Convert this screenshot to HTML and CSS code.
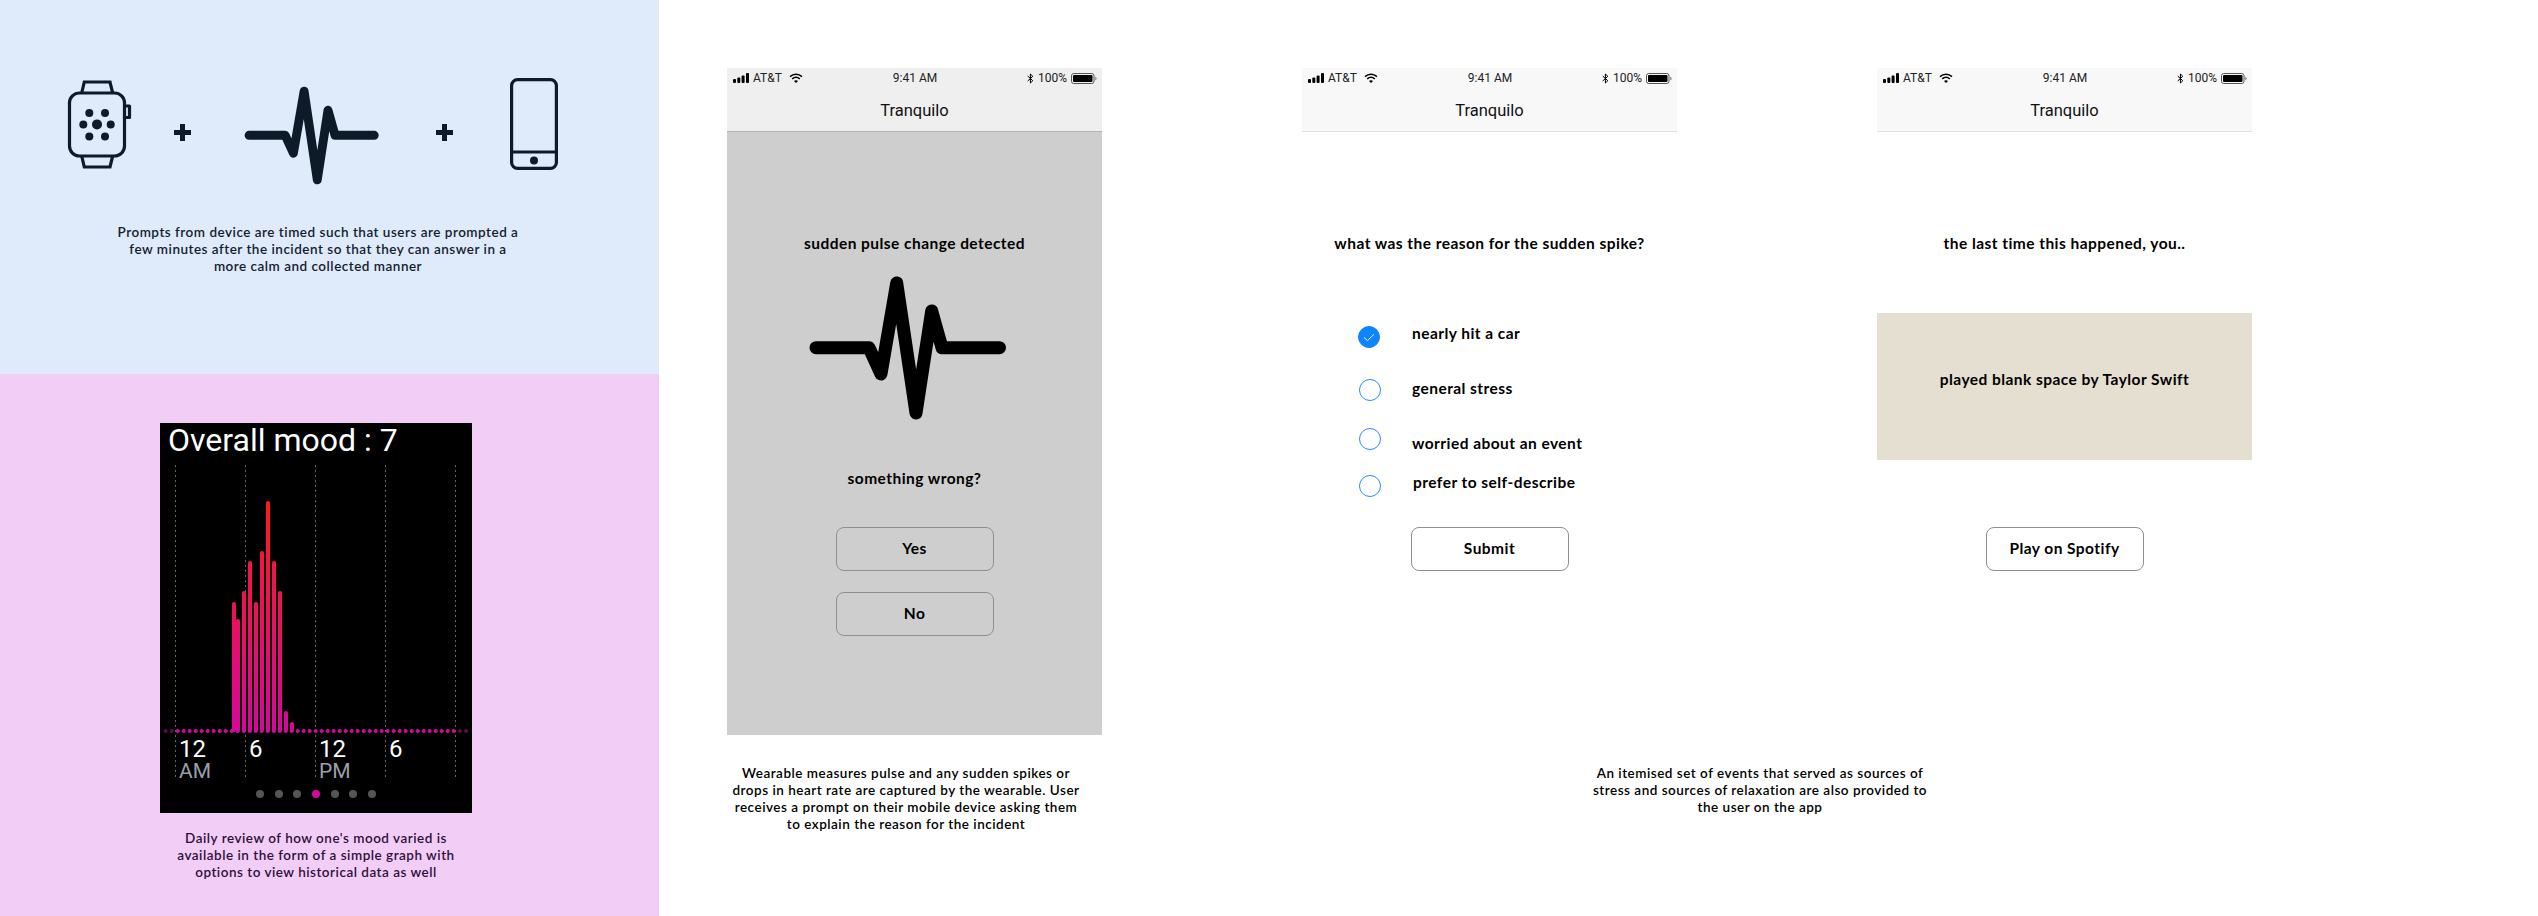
FILE: index.html
```html
<!DOCTYPE html>
<html lang="en">
<head>
  <meta charset="UTF-8">
  <title>Tranquilo</title>
  <link rel="stylesheet" href="styles.css">
</head>
<body>

  <!-- Shared icons -->
  <svg class="defs" width="0" height="0">
    <symbol id="pulse" viewBox="0 0 200 148">
      <path d="M7 73.7H60L72 100L87.7 9L107 139L122.7 37L133 73.7H190.5" fill="none" stroke="currentColor" stroke-width="13" stroke-linecap="round" stroke-linejoin="round"/>
    </symbol>
    <symbol id="plus" viewBox="0 0 17 17">
      <path d="M0 8.5H17M8.5 0V17" stroke="currentColor" stroke-width="5"/>
    </symbol>
    <symbol id="status-left" viewBox="0 0 16 10">
      <rect x="0" y="6" width="3" height="4" rx="1"/>
      <rect x="4.3" y="4.5" width="3" height="5.5" rx="1"/>
      <rect x="8.6" y="2.5" width="3" height="7.5" rx="1"/>
      <rect x="13" y="0" width="3" height="10" rx="1"/>
    </symbol>
    <symbol id="wifi" viewBox="0 0 14 10">
      <path d="M1 3.6C4.4 .5 9.6 .5 13 3.6M3.2 5.9C5.4 4 8.6 4 10.8 5.9" fill="none" stroke="#000" stroke-width="1.5"/>
      <path d="M5 7.9C6.2 6.9 7.8 6.9 9 7.9L7 10Z"/>
    </symbol>
    <symbol id="bluetooth" viewBox="0 0 7 11">
      <path d="M.7 3L5.8 7.7L3.4 10V1L5.8 3.3L.7 8" fill="none" stroke="#000" stroke-width="1"/>
    </symbol>
    <symbol id="battery" viewBox="0 0 26 11">
      <rect x=".5" y=".5" width="22.5" height="10" rx="2.2" fill="none" stroke="#555"/>
      <rect x="2" y="2" width="19.5" height="7" rx="1"/>
      <path d="M24.3 3.7C25.2 4 25.6 4.7 25.6 5.5S25.2 7 24.3 7.3Z" fill="#777"/>
    </symbol>
  </svg>

  <div class="side">
    <section class="panel panel-blue">
      <div class="icon-row">
        <svg class="icon-watch" viewBox="0 0 66 90" fill="none" stroke="currentColor" stroke-width="3.2">
          <rect x="3.5" y="13" width="55" height="63" rx="10"/>
          <path d="M15.7 13L18.3 2H44L46.7 13M15.7 76L18.3 87H44L46.7 76"/>
          <path d="M58.5 26H63.5V37.5H58.5" stroke-linejoin="round"/>
          <g fill="currentColor" stroke="none">
            <circle cx="23.3" cy="33" r="4"/>
            <circle cx="39" cy="33" r="4"/>
            <circle cx="17.3" cy="44.4" r="4"/>
            <circle cx="31" cy="44.4" r="5"/>
            <circle cx="44.7" cy="44.4" r="4"/>
            <circle cx="23.3" cy="56.4" r="4"/>
            <circle cx="39" cy="56.4" r="4"/>
          </g>
        </svg>
        <svg class="icon-plus"><use href="#plus"/></svg>
        <svg class="icon-pulse"><use href="#pulse"/></svg>
        <svg class="icon-plus icon-plus-2"><use href="#plus"/></svg>
        <svg class="icon-phone" viewBox="0 0 48 92" fill="none" stroke="currentColor" stroke-width="3.2">
          <rect x="1.6" y="1.6" width="44.8" height="88.8" rx="6"/>
          <path d="M1.6 74H46.4"/>
          <circle cx="24" cy="82.5" r="4" fill="currentColor" stroke="none"/>
        </svg>
      </div>
      <p class="caption caption-blue">Prompts from device are timed such that users are prompted a<br>few minutes after the incident so that they can answer in a<br>more calm and collected manner</p>
    </section>

    <section class="panel panel-pink">
      <div class="watch">
        <div class="watch-title">Overall mood : 7</div>
        <svg class="chart" viewBox="0 0 312 314" width="312" height="314">
          <defs>
            <linearGradient id="bar-fill" gradientUnits="userSpaceOnUse" x1="0" y1="36" x2="0" y2="267">
              <stop offset="0" stop-color="#ff1a1f"/>
              <stop offset="1" stop-color="#d4089c"/>
            </linearGradient>
          </defs>
          <path class="grid-line" d="M15.5 0V314M85.5 0V314M155.5 0V314M225.5 0V314M295.5 0V314"/>
          <path class="dots dots-dim" d="M5.7 266H12M300 266H307"/>
          <path class="dots" d="M17.7 266H295"/>
          <g fill="url(#bar-fill)">
            <rect x="72" y="137" width="4" height="130" rx="2"/>
            <rect x="76" y="154" width="4" height="113" rx="2"/>
            <rect x="82" y="126" width="4" height="141" rx="2"/>
            <rect x="88" y="96" width="4" height="171" rx="2"/>
            <rect x="94" y="137" width="4" height="130" rx="2"/>
            <rect x="100" y="86" width="4" height="181" rx="2"/>
            <rect x="106" y="36" width="4" height="231" rx="2"/>
            <rect x="112" y="96" width="4" height="171" rx="2"/>
            <rect x="118" y="126" width="4" height="141" rx="2"/>
            <rect x="124" y="246" width="4" height="21" rx="2"/>
            <rect x="130" y="257" width="4" height="10" rx="2"/>
          </g>
        </svg>
        <div class="axis">
          <div class="tick">12<span>AM</span></div>
          <div class="tick">6</div>
          <div class="tick">12<span>PM</span></div>
          <div class="tick">6</div>
        </div>
        <div class="pager">
          <i></i><i></i><i></i><i class="on"></i><i></i><i></i><i></i>
        </div>
      </div>
      <p class="caption caption-pink">Daily review of how one's mood varied is<br>available in the form of a simple graph with<br>options to view historical data as well</p>
    </section>
  </div>

  <div class="screen-col first-col">
    <div class="phone phone-dim">
      <div class="status">
        <div class="status-left"><svg class="st-signal"><use href="#status-left"/></svg>AT&amp;T<svg class="st-wifi"><use href="#wifi"/></svg></div>
        <div class="status-mid">9:41 AM</div>
        <div class="status-right"><svg class="st-bt"><use href="#bluetooth"/></svg>100%<svg class="st-batt"><use href="#battery"/></svg></div>
      </div>
      <div class="nav">Tranquilo</div>
      <div class="phone-body">
        <div class="question">sudden pulse change detected</div>
        <svg class="big-pulse"><use href="#pulse"/></svg>
        <div class="wrong">something wrong?</div>
        <div class="btn">Yes</div>
        <div class="btn btn-no">No</div>
      </div>
    </div>
    <p class="caption caption-phone">Wearable measures pulse and any sudden spikes or<br>drops in heart rate are captured by the wearable. User<br>receives a prompt on their mobile device asking them<br>to explain the reason for the incident</p>
  </div>

  <div class="screen-col second-col">
    <div class="phone-row">
      <div class="phone">
        <div class="status">
          <div class="status-left"><svg class="st-signal"><use href="#status-left"/></svg>AT&amp;T<svg class="st-wifi"><use href="#wifi"/></svg></div>
          <div class="status-mid">9:41 AM</div>
          <div class="status-right"><svg class="st-bt"><use href="#bluetooth"/></svg>100%<svg class="st-batt"><use href="#battery"/></svg></div>
        </div>
        <div class="nav">Tranquilo</div>
        <div class="phone-body">
          <div class="question">what was the reason for the sudden spike?</div>
          <ul class="options">
            <li class="opt-1"><span class="radio checked"><svg viewBox="0 0 22 22"><path d="M5.5 11.5L9.3 15L16.5 8" fill="none" stroke="#fff" stroke-width="1"/></svg></span><span class="opt-text">nearly hit a car</span></li>
            <li class="opt-2"><span class="radio"></span><span class="opt-text">general stress</span></li>
            <li class="opt-3"><span class="radio"></span><span class="opt-text">worried about an event</span></li>
            <li class="opt-4"><span class="radio"></span><span class="opt-text">prefer to self-describe</span></li>
          </ul>
          <div class="btn btn-submit">Submit</div>
        </div>
      </div>

      <div class="phone">
        <div class="status">
          <div class="status-left"><svg class="st-signal"><use href="#status-left"/></svg>AT&amp;T<svg class="st-wifi"><use href="#wifi"/></svg></div>
          <div class="status-mid">9:41 AM</div>
          <div class="status-right"><svg class="st-bt"><use href="#bluetooth"/></svg>100%<svg class="st-batt"><use href="#battery"/></svg></div>
        </div>
        <div class="nav">Tranquilo</div>
        <div class="phone-body">
          <div class="question">the last time this happened, you..</div>
          <div class="memory">played blank space by Taylor Swift</div>
          <div class="btn btn-play">Play on Spotify</div>
        </div>
      </div>
    </div>
    <p class="caption caption-events">An itemised set of events that served as sources of<br>stress and sources of relaxation are also provided to<br>the user on the app</p>
  </div>

</body>
</html>
```

FILE: styles.css
```css
* {
  margin: 0;
  padding: 0;
  box-sizing: border-box;
}

body {
  display: flex;
  width: 2538px;
  height: 916px;
  overflow: hidden;
  background-color: #fff;
  color: #000;
  font-family: 'Lato', 'Open Sans', sans-serif;
}

.defs {
  position: absolute;
}

/* Left column */
.side {
  width: 659px;
  flex: none;
}

.panel {
  overflow: hidden;
}

.panel-blue {
  height: 374px;
  background-color: #dfebfb;
  color: #0d1a28;
}

.panel-pink {
  height: 542px;
  background-color: #f2cef6;
  padding-top: 49px;
}

.icon-row {
  display: flex;
  align-items: flex-start;
  padding: 78px 0 0 66px;
}

.icon-row svg {
  flex: none;
}

.icon-watch {
  width: 66px;
  height: 90px;
  margin-top: 2px;
}

.icon-plus {
  width: 17px;
  height: 17px;
  margin: 46px 0 0 42px;
}

.icon-pulse {
  width: 137px;
  height: 101px;
  margin: 7px 0 0 53px;
  color: #0d1a28;
}

.icon-plus-2 {
  margin-left: 55px;
}

.icon-phone {
  width: 48px;
  height: 92px;
  margin-left: 57px;
}

.caption {
  font-size: 13.5px;
  line-height: 17px;
  font-weight: 600;
  letter-spacing: .5px;
  text-align: center;
}

.caption-blue {
  width: 420px;
  margin: 38px 0 0 108px;
  color: #14202e;
}

.caption-pink {
  width: 360px;
  margin: 17px 0 0 136px;
  color: #2f0f3c;
}

/* Watch graph */
.watch {
  position: relative;
  width: 312px;
  height: 390px;
  margin-left: 160px;
  background-color: #000;
  color: #fff;
  font-family: 'Roboto', sans-serif;
}

.watch-title {
  height: 42px;
  padding-left: 8px;
  font-size: 32px;
  line-height: 34px;
}

.chart {
  display: block;
}

.grid-line {
  fill: none;
  stroke: #666;
  stroke-width: 1;
  stroke-dasharray: 2 3;
}

.dots {
  fill: none;
  stroke: #d4089c;
  stroke-width: 4;
  stroke-linecap: round;
  stroke-dasharray: 0 6;
}

.dots-dim {
  stroke: #5e0b48;
}

.axis {
  position: absolute;
  left: 19px;
  top: 315px;
  display: flex;
  font-size: 24px;
  line-height: 22px;
}

.tick {
  width: 70px;
}

.tick span {
  display: block;
  color: #9aa0a9;
  font-size: 21px;
}

.pager {
  display: flex;
  justify-content: center;
  gap: 10.6px;
  margin-top: 11px;
}

.pager i {
  width: 8px;
  height: 8px;
  border-radius: 50%;
  background-color: #555;
}

.pager .on {
  background-color: #d4089c;
}

/* Phone screens */
.screen-col {
  padding-top: 68px;
}

.first-col {
  width: 375px;
  margin-left: 68px;
  flex: none;
}

.second-col {
  margin-left: 200px;
  flex: none;
}

.phone-row {
  display: flex;
  gap: 200px;
}

.phone {
  width: 375px;
  height: 667px;
  display: flex;
  flex-direction: column;
}

.status {
  display: flex;
  align-items: center;
  height: 20px;
  padding: 0 5px 0 6px;
  background-color: #f8f8f8;
  font-family: 'Roboto', sans-serif;
  font-size: 12px;
  color: #222;
}

.phone-dim .status,
.phone-dim .nav {
  background-color: #efefef;
}

.status-left,
.status-right {
  flex: 1;
  display: flex;
  align-items: center;
}

.status-right {
  justify-content: flex-end;
}

.st-signal {
  width: 16px;
  height: 10px;
  margin-right: 4px;
}

.st-wifi {
  width: 14px;
  height: 10px;
  margin-left: 7px;
}

.st-bt {
  width: 7px;
  height: 11px;
  margin-right: 4px;
}

.st-batt {
  width: 26px;
  height: 11px;
  margin-left: 4px;
}

.nav {
  height: 44px;
  padding-top: 1px;
  border-bottom: 1px solid #e0e0e0;
  background-color: #f8f8f8;
  font-family: 'Roboto', sans-serif;
  font-size: 16.5px;
  line-height: 44px;
  text-align: center;
  color: #111;
}

.phone-dim .nav {
  border-bottom-color: #b5b5b5;
}

.phone-body {
  flex: 1;
  display: flex;
  flex-direction: column;
  align-items: center;
  padding-top: 101px;
}

.phone-dim .phone-body {
  background-color: #cecece;
}

.question,
.wrong,
.opt-text,
.memory,
.btn {
  font-size: 15.5px;
  font-weight: 700;
  letter-spacing: .45px;
  line-height: 20px;
}

.big-pulse {
  width: 200px;
  height: 148px;
  margin: 21px 0 0 -11px;
}

.wrong {
  margin-top: 46px;
}

.btn {
  width: 158px;
  height: 44px;
  margin-top: 39px;
  border: 1px solid #8f8f8f;
  border-radius: 8px;
  line-height: 40px;
  text-align: center;
}

.btn-no {
  margin-top: 21px;
}

.btn-submit {
  margin-top: 0;
}

.btn-play {
  margin-top: 67px;
}

/* Reason list, the rows are not evenly spaced in the design */
.options {
  list-style: none;
  align-self: flex-start;
  margin-left: 57px;
  height: 274px;
}

.options li {
  display: flex;
  align-items: flex-start;
}

.radio {
  width: 22px;
  height: 22px;
  border: 1.3px solid #2a8cff;
  border-radius: 50%;
  flex: none;
}

.radio.checked {
  background-color: #0f84ff;
  border-color: #0f84ff;
  margin-left: -1px;
  margin-right: 1px;
}

.radio svg {
  display: block;
  width: 20px;
  height: 20px;
}

.opt-text {
  margin-left: 31px;
}

.opt-1 {
  margin-top: 73px;
}

.opt-1 .opt-text {
  margin-top: -3px;
}

.opt-2 {
  margin-top: 31px;
}

.opt-2 .opt-text {
  margin-top: -1px;
}

.opt-3 {
  margin-top: 27px;
}

.opt-3 .opt-text {
  margin-top: 5px;
}

.opt-4 {
  margin-top: 22px;
}

.opt-4 .opt-text {
  margin-left: 32px;
  margin-top: -3px;
}

.memory {
  width: 100%;
  height: 147px;
  margin-top: 60px;
  padding-top: 56px;
  background-color: #e5dfd1;
  text-align: center;
}

.caption-phone {
  width: 358px;
  margin-top: 30px;
}

.caption-events {
  width: 350px;
  margin: 30px 0 0 283px;
}
```
